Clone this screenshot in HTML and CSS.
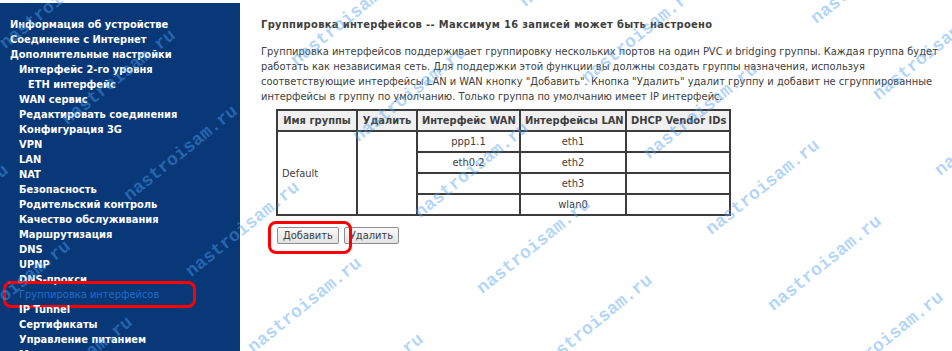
FILE: index.html
```html
<!DOCTYPE html>
<html>
<head>
    <meta charset="UTF-8">
    <title>Группировка интерфейсов</title>
    <link rel="stylesheet" href="styles.css">
</head>
<body>
    <div class="page">
        <div class="menu">
            <div class="menu-item lvl1">Информация об устройстве</div>
            <div class="menu-item lvl1">Соединение с Интернет</div>
            <div class="menu-item lvl1">Дополнительные настройки</div>
            <div class="menu-item lvl2">Интерфейс 2-го уровня</div>
            <div class="menu-item lvl3">ETH интерфейс</div>
            <div class="menu-item lvl2">WAN сервис</div>
            <div class="menu-item lvl2">Редактировать соединения</div>
            <div class="menu-item lvl2">Конфигурация 3G</div>
            <div class="menu-item lvl2">VPN</div>
            <div class="menu-item lvl2">LAN</div>
            <div class="menu-item lvl2">NAT</div>
            <div class="menu-item lvl2">Безопасность</div>
            <div class="menu-item lvl2">Родительский контроль</div>
            <div class="menu-item lvl2">Качество обслуживания</div>
            <div class="menu-item lvl2">Маршрутизация</div>
            <div class="menu-item lvl2">DNS</div>
            <div class="menu-item lvl2">UPNP</div>
            <div class="menu-item lvl2">DNS-прокси</div>
            <div class="menu-item lvl2 active">Группировка интерфейсов</div>
            <div class="menu-item lvl2">IP Tunnel</div>
            <div class="menu-item lvl2">Сертификаты</div>
            <div class="menu-item lvl2">Управление питанием</div>
            <div class="menu-item lvl2">Мультикаст</div>
        </div>

        <div class="content">
            <div class="title">Группировка интерфейсов -- Максимум 16 записей может быть настроено</div>
            <p class="intro">Группировка интерфейсов поддерживает группировку нескольких портов на один PVC и bridging группы. Каждая группа будет<br>
            работать как независимая сеть. Для поддержки этой функции вы должны создать группы назначения, используя<br>
            соответствующие интерфейсы LAN и WAN кнопку "Добавить". Кнопка "Удалить" удалит группу и добавит не сгруппированные<br>
            интерфейсы в группу по умолчанию. Только группа по умолчанию имеет IP интерфейс.</p>

            <table class="groups">
                <thead>
                    <tr>
                        <th class="col-name">Имя группы</th>
                        <th class="col-del">Удалить</th>
                        <th class="col-wan">Интерфейс WAN</th>
                        <th class="col-lan">Интерфейсы LAN</th>
                        <th class="col-dhcp">DHCP Vendor IDs</th>
                    </tr>
                </thead>
                <tbody>
                    <tr>
                        <td class="name" rowspan="4">Default</td>
                        <td rowspan="4"></td>
                        <td>ppp1.1</td>
                        <td>eth1</td>
                        <td></td>
                    </tr>
                    <tr>
                        <td>eth0.2</td>
                        <td>eth2</td>
                        <td></td>
                    </tr>
                    <tr>
                        <td></td>
                        <td>eth3</td>
                        <td></td>
                    </tr>
                    <tr>
                        <td></td>
                        <td>wlan0</td>
                        <td></td>
                    </tr>
                </tbody>
            </table>

            <div class="buttons">
                <span class="marked"><button class="btn">Добавить</button></span>
                <button class="btn">Удалить</button>
            </div>
        </div>

        <!-- watermark -->
        <div class="watermarks">
            <span class="wm" style="left:817px;top:10px">nastroisam.ru</span>
            <span class="wm" style="left:879px;top:86px">nastroisam.ru</span>
            <span class="wm" style="left:941px;top:162px">nastroisam.ru</span>
            <span class="wm" style="left:526px;top:-7px">nastroisam.ru</span>
            <span class="wm" style="left:588px;top:69px">nastroisam.ru</span>
            <span class="wm" style="left:650px;top:145px">nastroisam.ru</span>
            <span class="wm" style="left:712px;top:221px">nastroisam.ru</span>
            <span class="wm" style="left:774px;top:297px">nastroisam.ru</span>
            <span class="wm" style="left:836px;top:373px">nastroisam.ru</span>
            <span class="wm" style="left:297px;top:52px">nastroisam.ru</span>
            <span class="wm" style="left:359px;top:128px">nastroisam.ru</span>
            <span class="wm" style="left:421px;top:204px">nastroisam.ru</span>
            <span class="wm" style="left:483px;top:280px">nastroisam.ru</span>
            <span class="wm" style="left:545px;top:356px">nastroisam.ru</span>
            <span class="wm" style="left:6px;top:35px">nastroisam.ru</span>
            <span class="wm" style="left:68px;top:111px">nastroisam.ru</span>
            <span class="wm" style="left:130px;top:187px">nastroisam.ru</span>
            <span class="wm" style="left:192px;top:263px">nastroisam.ru</span>
            <span class="wm" style="left:254px;top:339px">nastroisam.ru</span>
            <span class="wm" style="left:316px;top:415px">nastroisam.ru</span>
            <span class="wm" style="left:-37px;top:322px">nastroisam.ru</span>
            <span class="wm" style="left:-99px;top:246px">nastroisam.ru</span>
            <span class="wm" style="left:25px;top:398px">nastroisam.ru</span>
        </div>
    </div>
</body>
</html>
```

FILE: styles.css
```css
body {
    margin: 0;
    background: white;
    font-family: "DejaVu Sans Condensed", "DejaVu Sans", sans-serif;
    font-size: 11px;
    color: #404040;
}
.page {
    position: relative;
    display: flex;
    padding-top: 3px;
    height: 348px;
    overflow: hidden;
}

/* Left menu */
.menu {
    width: 240px;
    flex-shrink: 0;
    background-color: #083878;
    padding-top: 14px;
    box-sizing: border-box;
}
.menu-item {
    position: relative;
    line-height: 15px;
    height: 15px;
    color: white;
    font-weight: bold;
    white-space: nowrap;
}
.lvl1 {
    padding-left: 10px;
}
.lvl2 {
    padding-left: 19px;
}
.lvl3 {
    padding-left: 28px;
}
.menu-item.active {
    color: #1e6cc4;
    font-weight: normal;
}
.menu-item.active::after {
    content: "";
    position: absolute;
    left: 3px;
    top: -6px;
    width: 193px;
    height: 27px;
    border: 3px solid #ff0000;
    border-radius: 8px;
    box-sizing: border-box;
}

/* Content */
.content {
    flex: 1;
    padding-left: 21px;
    padding-top: 14px;
}
.title {
    font-weight: bold;
    line-height: 15px;
    letter-spacing: 0.35px;
}
.intro {
    margin: 12px 0 0 0;
    line-height: 15px;
    white-space: nowrap;
}
.groups {
    border-collapse: collapse;
    table-layout: fixed;
    width: 453px;
    margin: 5px 0 0 15px;
    border: 2px solid #3c3c3c;
}
.groups th, .groups td {
    border: 2px solid #3c3c3c;
    height: 17px;
    padding: 1px 4px;
    text-align: center;
    line-height: 15px;
    white-space: nowrap;
    overflow: hidden;
}
.groups th {
    background-color: #f0f0f0;
    font-weight: bold;
}
.groups td.name {
    text-align: left;
}
.col-name { width: 70px; }
.col-del { width: 50px; }
.col-wan { width: 93px; }
.col-lan { width: 96px; }
.col-dhcp { width: 94px; }

.buttons {
    display: flex;
    gap: 5px;
    margin: 11px 0 0 16px;
}
.marked {
    position: relative;
    display: inline-block;
}
.marked::after {
    content: "";
    position: absolute;
    left: -9px;
    top: -6px;
    width: 84px;
    height: 33px;
    border: 3px solid #ff0000;
    border-radius: 8px;
    box-sizing: border-box;
}
.btn {
    font-family: "DejaVu Sans Condensed", "DejaVu Sans", sans-serif;
    font-size: 11px;
    color: #404040;
    height: 17px;
    padding: 0 5px;
    border: 1px solid #8e8e8e;
    border-radius: 2px;
    background: linear-gradient(#fafafa, #e2e2e2);
    display: block;
}

/* Watermark over page */
.watermarks {
    position: absolute;
    left: 0;
    top: 0;
    right: 0;
    bottom: 0;
    pointer-events: none;
}
.wm {
    position: absolute;
    font-family: "Liberation Mono", monospace;
    font-weight: bold;
    font-size: 18px;
    line-height: 18px;
    color: rgba(80, 160, 240, 0.45);
    white-space: nowrap;
    transform-origin: 0 15px;
    transform: rotate(-39deg);
}
```
